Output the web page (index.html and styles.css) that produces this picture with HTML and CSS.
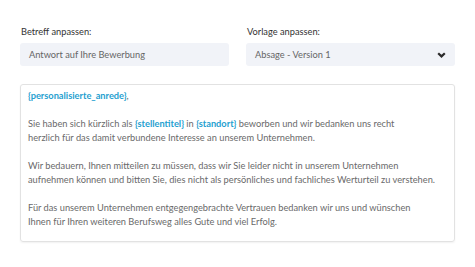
FILE: index.html
```html
<html>
<head>
<meta http-equiv="Content-Type" content="text/html; charset=utf-8"/>
<title>Absage anpassen</title>
<link rel="stylesheet" href="styles.css">
</head>
<body>
<div id="main">

<div class="fields">
<div class="field">
<label for="subject">Betreff anpassen:</label>
<div class="input" id="subject">Antwort auf Ihre Bewerbung</div>
</div>
<div class="field">
<label for="template">Vorlage anpassen:</label>
<div class="input select" id="template">
<span>Absage - Version 1</span>
<svg class="chevron" width="9" height="6" viewBox="0 0 9 6"><path d="M1.2 1.2l3.3 3.2L7.8 1.2" fill="none" stroke="#2b2b2b" stroke-width="2.2"/></svg>
</div>
</div>
</div> <!-- fields -->

<div class="letter">
<p><span class="var">{personalisierte_anrede}</span>,</p>
<p>Sie haben sich kürzlich als <span class="var">{stellentitel}</span> in <span class="var">{standort}</span> beworben und wir bedanken uns recht<br>herzlich für das damit verbundene Interesse an unserem Unternehmen.</p>
<p>Wir bedauern, Ihnen mitteilen zu müssen, dass wir Sie leider nicht in unserem Unternehmen<br>aufnehmen können und bitten Sie, dies nicht als persönliches und fachliches Werturteil zu verstehen.</p>
<p>Für das unserem Unternehmen entgegengebrachte Vertrauen bedanken wir uns und wünschen<br>Ihnen für Ihren weiteren Berufsweg alles Gute und viel Erfolg.</p>
</div> <!-- letter -->

</div> <!-- main -->
</body>
</html>
```

FILE: styles.css
```css
body {
	margin: 0;
	padding: 0;
	background: #fff;
	font-family: Lato, "Liberation Sans", sans-serif;
	font-size: 9.25px;
	color: #666;
}

#main {
	padding: 26px 20px 0 20px;
	width: 435px;
}

.fields {
	display: flex;
	gap: 17px;
}

.field {
	flex: 1;
	display: flex;
	flex-direction: column;
}

.field label {
	color: #333;
	line-height: 12px;
	margin: 0 0 5px 1px;
}

.input {
	height: 23px;
	background: #f1f3f8;
	border-radius: 3px;
	padding: 0 9px;
	display: flex;
	align-items: center;
	color: #666;
	box-sizing: border-box;
}

.select {
	justify-content: space-between;
	padding-right: 9px;
}

.chevron {
	display: block;
}

.letter {
	margin-top: 18px;
	height: 158px;
	box-sizing: border-box;
	border: 1px solid #e2e2e2;
	border-radius: 3px;
	box-shadow: 0 1px 2px rgba(0, 0, 0, 0.06);
	padding: 4px 7px;
	line-height: 14px;
	color: #6a6a6a;
}

.letter p {
	margin: 0 0 14px 0;
}

.var {
	color: #1f9fd0;
	font-weight: bold;
}
```
